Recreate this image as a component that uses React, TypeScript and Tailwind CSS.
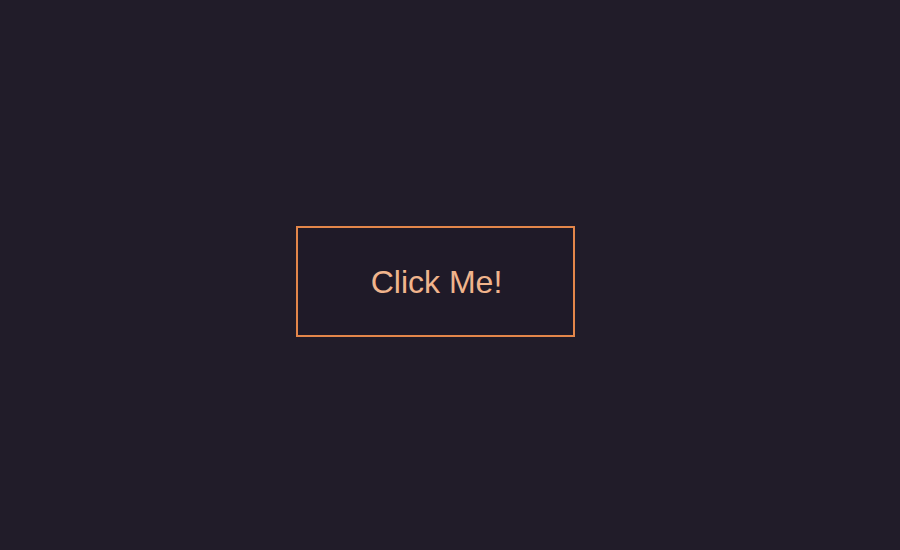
export default function App() {
  return (
    <div className="w-[900px] h-[550px] bg-[#211c29] pl-[296px] pt-[226px] font-['Liberation_Sans',Arial,sans-serif]">
      <button className="w-[279px] h-[111px] border-2 border-[#e3864a] bg-[#1f1a28] text-[#f0b48c] text-[32px] leading-none flex items-center justify-center pt-[1px] pl-[2px] font-['Liberation_Sans',Arial,sans-serif]">
        Click Me!
      </button>
    </div>
  );
}
